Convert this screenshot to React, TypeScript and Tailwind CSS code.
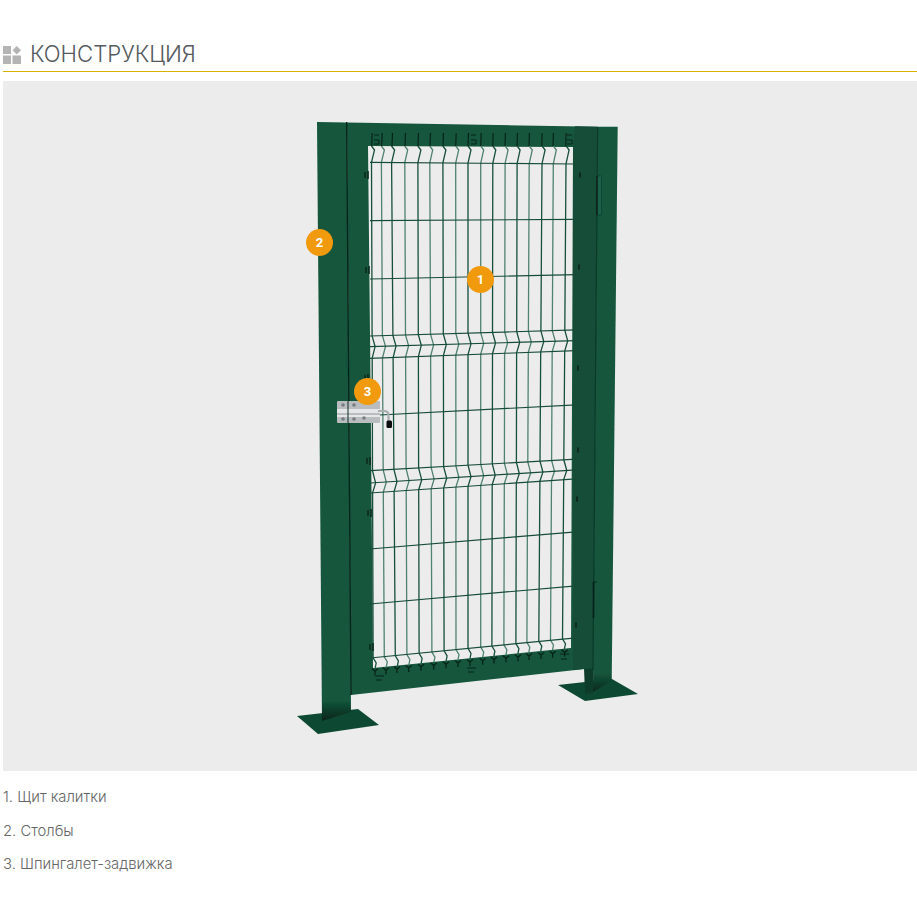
import React from 'react';

const topX = [371.7, 381.7, 392, 405, 418, 430, 443, 455.7, 468, 480.7, 492.7, 505, 517, 529, 541.7, 553, 565.7];
const botX = [373, 384, 395, 406.7, 419, 431.7, 444, 456, 468, 480.7, 492, 504, 516, 527, 539, 550.7, 562.7];

// each rail: y at the left edge (x=370) and at the right edge (x=574)
const rails: [number, number][] = [
    [162.3, 164],
    [220.7, 219.3],
    [279, 274.7],
    [336, 330],
    [346.7, 340.7],
    [358.3, 350.7],
    [415.5, 405],
    [470.7, 459.3],
    [483, 470],
    [493, 479],
    [549, 532],
    [604, 586],
    [658, 638],
];

const railY = (r: [number, number], x: number) => r[0] + ((r[1] - r[0]) * (x - 370)) / 204;
const wireX = (i: number, y: number) => topX[i] + ((botX[i] - topX[i]) * (y - 210)) / 403;

const wirePath = (i: number) => {
    const x0 = topX[i];
    const at = (r: number) => railY(rails[r], x0);
    const pt = (y: number, dx = 0) => `${(wireX(i, y) + dx).toFixed(1)} ${y.toFixed(1)}`;
    const bottom = at(12);
    return [
        `M${pt(146)}`,
        `L${pt(150, 3)}`,
        `L${pt(at(0))}`,
        `L${pt(at(3))}`,
        `L${pt(at(4), 3)}`,
        `L${pt(at(5))}`,
        `L${pt(at(7))}`,
        `L${pt(at(8), 3)}`,
        `L${pt(at(9))}`,
        `L${pt(bottom)}`,
        `L${pt(bottom + 5, 3)}`,
        `L${pt(bottom + 10, 2)}`,
    ].join(' ');
};

const GateDrawing = () => (
    <svg viewBox="3 81 914 690" className="block h-full w-full">
        <defs>
            <linearGradient id="postLeft" x1="0" y1="0" x2="0" y2="1">
                <stop offset="0" stopColor="#13573c" />
                <stop offset="0.965" stopColor="#13573c" />
                <stop offset="1" stopColor="#072418" />
            </linearGradient>
            <linearGradient id="postRight" x1="0" y1="0" x2="0" y2="1">
                <stop offset="0" stopColor="#15573d" />
                <stop offset="0.965" stopColor="#15573d" />
                <stop offset="1" stopColor="#08291c" />
            </linearGradient>
            <filter id="soft" x="-5%" y="-5%" width="110%" height="110%">
                <feGaussianBlur stdDeviation="0.35" />
            </filter>
        </defs>
        <g filter="url(#soft)">
            {/* base plates */}
            <polygon points="297,716 358,709 379,725 318,734" fill="#0e4a32" />
            <polygon points="558,685 612,679 638,694 585,701" fill="#0e4a32" />

            {/* right post */}
            <polygon points="597.7,126.7 617.7,126.7 611.7,681 593,692" fill="url(#postRight)" />
            <polygon points="584,668 593.5,668 593,693 585,694" fill="#0c3d2a" />

            {/* door frame with the opening cut out */}
            <path
                fillRule="evenodd"
                fill="#14563c"
                d="M347 122.5 L597.7 126.7 L593.5 668 L351 695 Z M368 146 L370.7 400 L373 668 L571 648 L573 147 Z"
            />
            <polygon points="575,126.3 597.7,126.7 593.5,668 573,670 573,147" fill="#124d37" />

            {/* left post */}
            <polygon points="317,122 347,122.5 351,712 322,721" fill="url(#postLeft)" />

            {/* seams */}
            <line x1="346.7" y1="122" x2="351" y2="695" stroke="#06231a" strokeWidth="1.3" />
            <line x1="597.7" y1="127" x2="593" y2="670" stroke="#0a3827" strokeWidth="1.1" />

            {/* hinges */}
            <rect x="597" y="176" width="4.5" height="39" fill="#1c6149" stroke="#0d3b2a" strokeWidth="0.6" />
            <line x1="597" y1="176" x2="597" y2="215" stroke="#06201a" strokeWidth="1.4" />
            <line x1="593.5" y1="582" x2="593.5" y2="618" stroke="#06201a" strokeWidth="1.6" />
            <line x1="593.5" y1="582" x2="597" y2="582" stroke="#06201a" strokeWidth="0.8" />

            {/* mesh */}
            {topX.map((x, i) => (
                <path
                    key={x}
                    d={wirePath(i)}
                    fill="none"
                    stroke={i % 2 === 0 ? '#174f3c' : '#4f8270'}
                    strokeWidth="1.3"
                />
            ))}
            {rails.map((r, i) => (
                <line key={i} x1={370} y1={r[0]} x2={576} y2={railY(r, 576)} stroke="#174c3a" strokeWidth="1.2" />
            ))}

            {/* top ticks */}
            {topX.map(x => (
                <line key={x} x1={x + 0.5} y1="133" x2={x} y2="146" stroke="#062419" strokeWidth="1.2" />
            ))}
            {[374, 471, 567].map(x => (
                <path key={x} d={`M${x} 135 h5 M${x} 140 h5 v4 h-5`} fill="none" stroke="#062419" strokeWidth="1" />
            ))}

            {/* bottom Y ticks */}
            {botX.map(x => {
                const y = railY(rails[12], x) + 11;
                return (
                    <path
                        key={x}
                        d={`M${x - 1} ${y} l3 2.5 l3 -2.5 M${x + 2} ${y + 2.5} v4`}
                        fill="none"
                        stroke="#062419"
                        strokeWidth="1.3"
                    />
                );
            })}
            <path d="M375 676 h9 M376 680 h6 M467 668 h9 M468 672 h6 M560 654 h9 M561 659 h6" stroke="#062419" strokeWidth="1" />

            {/* clips on the frame */}
            {[
                [365, 175],
                [366, 270],
                [365, 378],
                [367, 461],
                [368, 513],
                [370, 647],
            ].map(([x, y]) => (
                <path key={y} d={`M${x} ${y - 3} v6 M${x + 3} ${y - 4} v8`} stroke="#062419" strokeWidth="1.5" />
            ))}
            {[
                [580, 175],
                [579, 267],
                [578, 368],
                [578, 450],
                [577, 499],
                [576, 625],
            ].map(([x, y]) => (
                <path key={y} d={`M${x} ${y - 2.5} v5`} stroke="#062419" strokeWidth="1.6" />
            ))}

            {/* latch */}
            <rect x="337" y="401" width="43" height="22" rx="1" fill="#b9bdc0" />
            <rect x="337" y="409" width="43" height="8" fill="#e4e6e7" />
            <line x1="337" y1="414" x2="380" y2="414" stroke="#8f9598" strokeWidth="1" />
            <line x1="348" y1="401" x2="348" y2="423" stroke="#0b2c20" strokeWidth="1" />
            {[
                [343, 405],
                [354, 405],
                [343, 419],
                [354, 419],
                [364, 418],
            ].map(([x, y]) => (
                <circle key={`${x}-${y}`} cx={x} cy={y} r="1.8" fill="#777d80" />
            ))}
            <path d="M378 411 H384 Q388.5 411 388.5 415 V421" fill="none" stroke="#a9aeb1" strokeWidth="2.2" />
            <rect x="386.5" y="420.5" width="5.5" height="7.5" rx="1.5" fill="#0a0a0a" />
        </g>
    </svg>
);

const Badge = ({ n, className }: { n: number; className: string }) => (
    <div
        className={`absolute flex h-[27px] w-[27px] items-center justify-center rounded-full bg-[#f29a0e] font-['Roboto',sans-serif] text-[13px] font-bold text-white ${className}`}
    >
        {n}
    </div>
);

const parts = ['1. Щит калитки', '2. Столбы', '3. Шпингалет-задвижка'];

export default function App() {
    return (
        <div className="min-h-[917px] bg-white pl-[3px] pt-[41px] font-['Inter',sans-serif]">
            <div className="flex h-[30px] items-start gap-[9px]">
                <svg viewBox="0 0 18 18" className="mt-[5px] h-[18px] w-[18px]" fill="#b4b4b4">
                    <rect x="0" y="0" width="8" height="8" />
                    <rect x="0" y="9.5" width="8" height="8.5" />
                    <rect x="9.5" y="9.5" width="8.5" height="8.5" />
                    <polygon points="13.7,0 18,4.2 13.7,8.4 9.5,4.2" />
                </svg>
                <h2 className="text-[22.2px] font-light leading-[26px] text-[#555a5e]">КОНСТРУКЦИЯ</h2>
            </div>
            <div className="h-px bg-[#d6b100]" />
            <div className="relative mt-[9px] h-[690px] bg-[#ececec]">
                <GateDrawing />
                <Badge n={1} className="left-[464px] top-[185px]" />
                <Badge n={2} className="left-[303px] top-[148px]" />
                <Badge n={3} className="left-[351px] top-[297px]" />
            </div>
            <div className="mt-[16px] flex flex-col gap-[13.5px]">
                {parts.map(p => (
                    <p key={p} className="text-[14.8px] font-light leading-[20px] text-[#666]">
                        {p}
                    </p>
                ))}
            </div>
        </div>
    );
}
